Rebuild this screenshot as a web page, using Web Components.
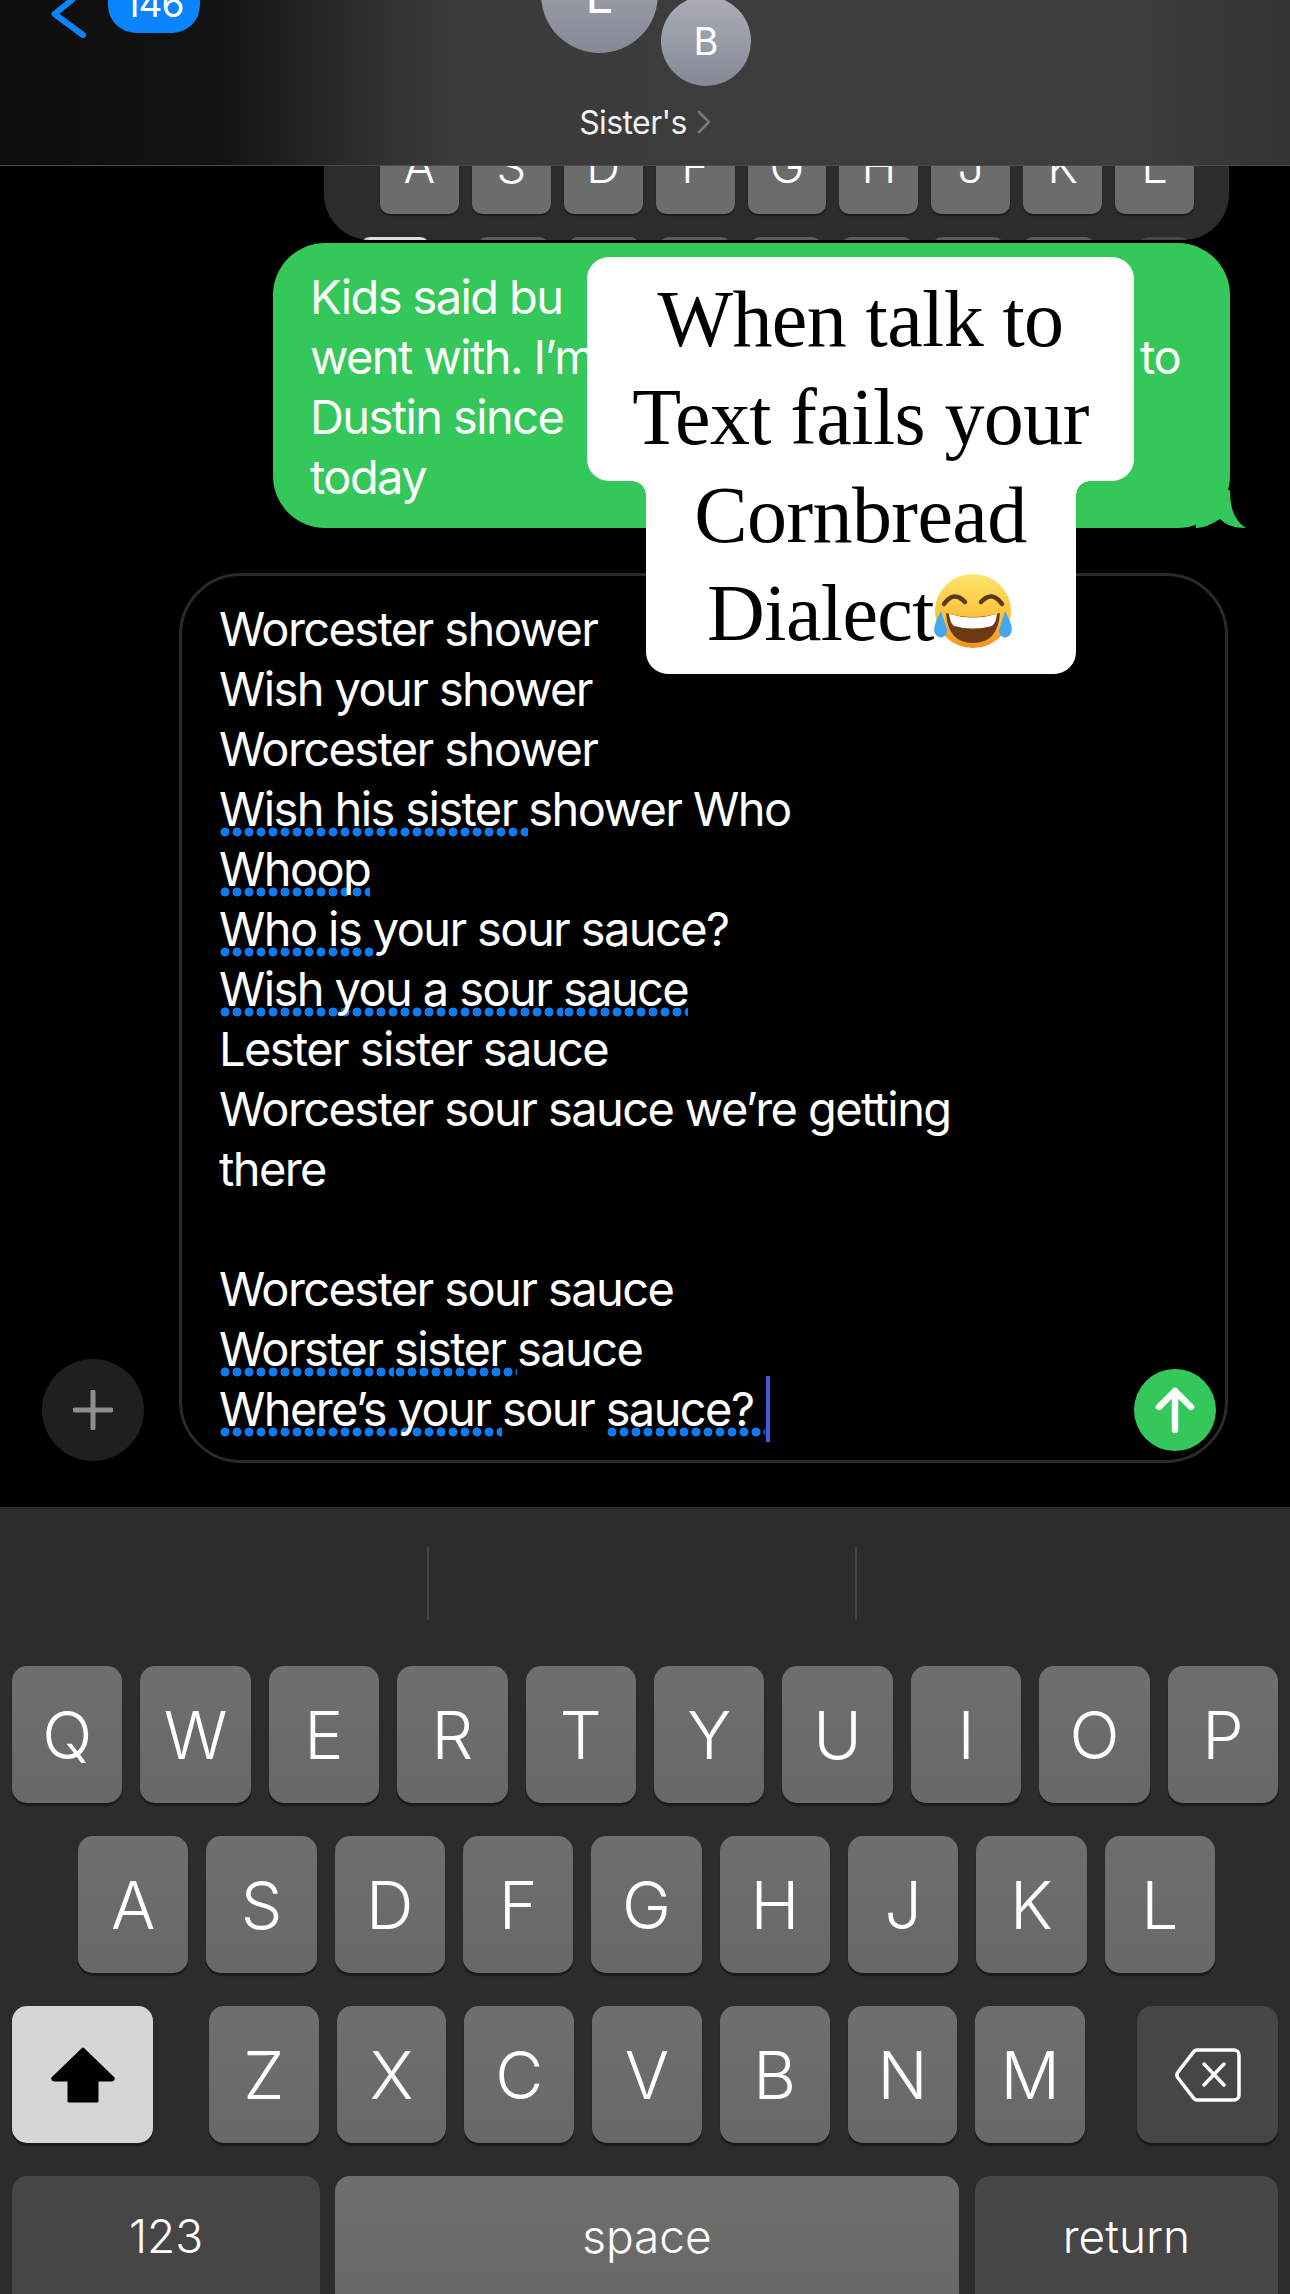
<!DOCTYPE html>
<html lang="en">
<head>
<meta charset="utf-8">
<title>Messages</title>
<style>
  html, body { margin: 0; padding: 0; background: #000; }
  body { width: 1290px; height: 2294px; overflow: hidden; font-family: Inter, "Liberation Sans", sans-serif; color: #fff; }
  chat-screen { width: 1290px; }
</style>
</head>
<body>
<chat-screen>
  <thread-header slot="header" count="146" title="Sister's"></thread-header>
  <mini-keyboard slot="header"></mini-keyboard>
  <chat-bubble>
    <div>Kids said bu</div>
    <div class="split"><span>went with. I’m</span><span>to</span></div>
    <div>Dustin since</div>
    <div>today</div>
  </chat-bubble>
  <compose-bar>
    <div>Worcester shower</div>
    <div>Wish your shower</div>
    <div>Worcester shower</div>
    <div><spell-word>Wish his sister</spell-word> shower Who</div>
    <div><spell-word>Whoop</spell-word></div>
    <div><spell-word>Who is</spell-word> your sour sauce?</div>
    <div><spell-word>Wish you a</spell-word> <spell-word>sour</spell-word> <spell-word>sauce</spell-word></div>
    <div>Lester sister sauce</div>
    <div>Worcester sour sauce we’re getting</div>
    <div>there</div>
    <div>&nbsp;</div>
    <div>Worcester sour sauce</div>
    <div><spell-word>Worster</spell-word> <spell-word>sister</spell-word> sauce</div>
    <div><spell-word>Where’s your</spell-word> sour <spell-word>sauce?</spell-word><text-caret></text-caret></div>
  </compose-bar>
  <ios-keyboard></ios-keyboard>
  <text-sticker></text-sticker>
</chat-screen>

<script>
const shadow = (el, html) => {
  el.attachShadow({ mode: 'open' });
  el.shadowRoot.innerHTML = html;
};

class ChatScreen extends HTMLElement {
  constructor() {
    super();
    shadow(this, `
      <style>
        :host { display: block; position: relative; height: 2294px; overflow: hidden; background: #000; }
      </style>
      <slot name="header"></slot>
      <slot></slot>
    `);
  }
}

class ThreadHeader extends HTMLElement {
  connectedCallback() {
    const count = this.getAttribute('count');
    const title = this.getAttribute('title');
    shadow(this, `
      <style>
        :host {
          display: block;
          height: 165px;
          overflow: hidden;
          border-bottom: 1px solid #4a4a4a;
          background: linear-gradient(90deg, #0e0e0e 0, #131313 17%, #2b2b2b 27%, #3b3b3b 35%, #3e3e3e 86%, #343434 100%);
        }
        .top { display: flex; align-items: flex-start; height: 86px; padding-left: 51px; }
        .back { width: 36px; height: 38px; flex: none; }
        .badge {
          width: 92px; height: 60px; margin: -27px 0 0 21px; flex: none;
          border-radius: 28px; background: #0a84ff;
          display: flex; align-items: center; justify-content: center;
          font-size: 37px; letter-spacing: -1px;
        }
        .avatar {
          flex: none; border-radius: 50%;
          display: flex; align-items: center; justify-content: center;
          background: linear-gradient(#abaeb9, #858995);
        }
        .l { width: 117px; height: 117px; margin: -64px 0 0 341px; font-size: 50px; }
        .b { width: 90px; height: 90px; margin: -4px 0 0 3px; font-size: 38px; }
        .title { display: flex; justify-content: center; align-items: center; gap: 10px; margin-top: 16px; height: 40px; font-size: 32px; letter-spacing: -.6px; color: #f2f2f2; }
        .title svg { width: 14px; height: 24px; }
      </style>
      <div class="top">
        <svg class="back" viewBox="0 0 36 38" fill="none" stroke="#0a84ff" stroke-width="6" stroke-linecap="round" stroke-linejoin="round"><path d="M21 0 L3.5 14 L32 35"/></svg>
        <div class="badge">${count}</div>
        <div class="avatar l">L</div>
        <div class="avatar b">B</div>
      </div>
      <div class="title"><span>${title}</span>
        <svg viewBox="0 0 14 24" fill="none" stroke="#7a7a7a" stroke-width="2.5" stroke-linecap="round" stroke-linejoin="round"><path d="M2 2 L12 12 L2 22"/></svg>
      </div>
    `);
  }
}

// the keyboard from the earlier screenshot, cut off by the header
class MiniKeyboard extends HTMLElement {
  constructor() {
    super();
    const letters = 'ASDFGHJKL'.split('').map(c => `<div class="k">${c}</div>`).join('');
    const dark = Array(7).fill('<div class="k2"></div>').join('');
    shadow(this, `
      <style>
        :host {
          display: block; box-sizing: border-box;
          width: 905px; height: 74px; margin-left: 324px;
          overflow: hidden; background: #2c2c2c;
          border-radius: 0 0 46px 46px;
        }
        .row1 { display: flex; gap: 13px; height: 98px; margin-top: -50px; padding: 0 35px 0 56px; }
        .k {
          flex: 1; border-radius: 10px;
          background: #6c6c6c; box-shadow: 0 2px 1px #1b1b1b;
          display: flex; align-items: center; justify-content: center;
          font-size: 47px; font-weight: 300;
        }
        .row2 { display: flex; gap: 19px; height: 98px; margin-top: 23px; padding-left: 36px; }
        .shift { width: 70px; flex: none; margin-right: 28px; border-radius: 10px; background: #dcdcdc; }
        .k2 { width: 72px; flex: none; border-radius: 10px; background: #5c5c5c; }
        .del { width: 51px; flex: none; margin-left: 25px; border-radius: 10px; background: #464646; }
      </style>
      <div class="row1">${letters}</div>
      <div class="row2"><div class="shift"></div>${dark}<div class="del"></div></div>
    `);
  }
}

class ChatBubble extends HTMLElement {
  constructor() {
    super();
    shadow(this, `
      <style>
        :host {
          display: block; box-sizing: border-box; position: relative;
          width: 957px; height: 285px; margin: 3px 0 0 273px;
          padding: 24px 50px 21px 37px;
          border-radius: 52px; background: #34c759;
          font-size: 47px; line-height: 60px; letter-spacing: -1.6px;
        }
        ::slotted(.split) { display: flex; justify-content: space-between; }
        .tail { position: absolute; right: -16px; bottom: 0; width: 50px; height: 38px; }
      </style>
      <slot></slot>
      <svg class="tail" viewBox="0 0 50 38"><path fill="#34c759" d="M34 0 C34 18 38 30 50 38 C38 38 30 35 24 29 C16 34 8 38 0 38 L0 0 Z"/></svg>
    `);
  }
}

class SpellWord extends HTMLElement {
  constructor() {
    super();
    shadow(this, `
      <style>
        :host {
          display: inline;
          background-image: radial-gradient(circle at 6px 5px, #0d7bf2 4.2px, transparent 4.8px);
          background-size: 12px 10px;
          background-repeat: repeat-x;
          background-position: left bottom;
        }
      </style>
      <slot></slot>
    `);
  }
}

class TextCaret extends HTMLElement {
  constructor() {
    super();
    shadow(this, `
      <style>
        :host {
          display: inline-block; width: 4px; height: 66px;
          margin: -8px 0 -8px 1px; vertical-align: -8px;
          background: #3d5fd9;
        }
      </style>
    `);
  }
}

class ComposeBar extends HTMLElement {
  constructor() {
    super();
    shadow(this, `
      <style>
        :host { display: flex; align-items: flex-end; gap: 35px; margin-top: 45px; padding: 0 62px 0 42px; }
        .plus {
          width: 102px; height: 102px; margin-bottom: 2px; flex: none;
          border-radius: 50%; background: #1f1f20;
          display: flex; align-items: center; justify-content: center;
        }
        .plus svg { width: 40px; height: 40px; }
        .field {
          flex: 1; display: flex; box-sizing: border-box; height: 890px;
          padding: 0 9px 9px 37px;
          border: 3px solid #2a2a2c; border-radius: 62px;
        }
        .text { flex: 1; padding: 23px 0 12px; font-size: 47px; line-height: 60px; letter-spacing: -1.6px; white-space: nowrap; }
        .send {
          width: 82px; height: 82px; flex: none; align-self: flex-end;
          border-radius: 50%; background: #34c759;
          display: flex; align-items: center; justify-content: center;
        }
        .send svg { width: 40px; height: 46px; }
      </style>
      <div class="plus">
        <svg viewBox="0 0 40 40" fill="none" stroke="#8f8f8f" stroke-width="5" stroke-linecap="round"><path d="M20 2 V38 M2 20 H38"/></svg>
      </div>
      <div class="field">
        <div class="text"><slot></slot></div>
        <div class="send">
          <svg viewBox="0 0 40 46" fill="none" stroke="#fff" stroke-width="6.5" stroke-linecap="round" stroke-linejoin="round"><path d="M20 43 V4 M4 20 L20 4 L36 20"/></svg>
        </div>
      </div>
    `);
  }
}

class KbKey extends HTMLElement {
  constructor() {
    super();
    shadow(this, `
      <style>
        :host {
          display: flex; align-items: center; justify-content: center;
          box-sizing: border-box; flex: 1; min-width: 0; height: 100%;
          border-radius: 15px;
          background: linear-gradient(#6f6f6f, #686868);
          box-shadow: 0 3px 1px #1b1b1b;
          font-size: 66px; font-weight: 300; color: #fff;
        }
        :host([tone="dark"]) { background: #464646; }
        :host([tone="light"]) { background: #d6d6d6; }
        :host([small]) { font-size: 46px; font-weight: 300; box-shadow: none; }
      </style>
      <slot></slot>
    `);
  }
}

class IosKeyboard extends HTMLElement {
  constructor() {
    super();
    const keys = s => s.split('').map(c => `<kb-key>${c}</kb-key>`).join('');
    shadow(this, `
      <style>
        :host { display: block; height: 787px; margin-top: 44px; background: #2c2c2c; box-sizing: border-box; padding-top: 40px; }
        .suggest { display: grid; grid-template-columns: 427px 430px 1fr; height: 73px; margin-bottom: 46px; }
        .suggest i { display: block; }
        .suggest i:nth-child(2) { border-left: 2px solid #444; border-right: 2px solid #444; }
        .row { display: flex; gap: 18px; height: 137px; margin-bottom: 33px; }
        .r1 { padding: 0 12px; }
        .r2 { padding: 0 75px 0 78px; }
        .r3 { padding: 0 12px; }
        .r3 .side { flex: 0 0 141px; }
        .r3 .shift { margin-right: 38px; }
        .r3 .del { margin-left: 34px; }
        .r4 { padding: 0 12px; height: 119px; gap: 15px; margin-bottom: 0; }
        .r4 kb-key:nth-child(1) { flex: 0 0 308px; }
        .r4 kb-key:nth-child(2) { flex: 0 0 624px; }
        .r4 kb-key:nth-child(3) { flex: 0 0 303px; margin-left: 1px; }
        .r4 kb-key { border-radius: 15px 15px 0 0; }
        .shift svg { width: 64px; height: 56px; }
        .del svg { width: 66px; height: 54px; }
      </style>
      <div class="suggest"><i></i><i></i><i></i></div>
      <div class="row r1">${keys('QWERTYUIOP')}</div>
      <div class="row r2">${keys('ASDFGHJKL')}</div>
      <div class="row r3">
        <kb-key class="side shift" tone="light">
          <svg viewBox="0 0 64 56"><path fill="#000" stroke="#000" stroke-width="3" stroke-linejoin="round" d="M32 2 L62 31 Q63 33 60 33 L46 33 L46 54 L18 54 L18 33 L4 33 Q1 33 2 31 Z"/></svg>
        </kb-key>
        ${keys('ZXCVBNM')}
        <kb-key class="side del" tone="dark">
          <svg viewBox="0 0 66 54" fill="none" stroke="#fff" stroke-width="3.5" stroke-linecap="round" stroke-linejoin="round"><path d="M22 2 H59 a5 5 0 0 1 5 5 V47 a5 5 0 0 1 -5 5 H22 a4 4 0 0 1 -3 -1.4 L3 30 a5 5 0 0 1 0 -6 L19 3.4 a4 4 0 0 1 3 -1.4 Z M29 16 L49 37 M49 16 L29 37"/></svg>
        </kb-key>
      </div>
      <div class="row r4">
        <kb-key tone="dark" small>123</kb-key>
        <kb-key small>space</kb-key>
        <kb-key tone="dark" small>return</kb-key>
      </div>
    `);
  }
}

class TextSticker extends HTMLElement {
  constructor() {
    super();
    shadow(this, `
      <style>
        :host {
          position: absolute; left: 587px; top: 257px;
          width: 547px; height: 417px;
          font-family: "Liberation Serif", serif; font-size: 80px; line-height: 98px;
          color: #000; text-align: center; letter-spacing: -.6px;
        }
        .wide, .narrow { position: absolute; background: #fff; }
        .wide { left: 0; top: 0; width: 547px; height: 224px; border-radius: 22px; }
        .narrow { left: 59px; top: 200px; width: 430px; height: 217px; border-radius: 0 0 22px 22px; }
        .notch { position: absolute; top: 224px; width: 14px; height: 14px; }
        .notch.a { left: 45px; background: radial-gradient(circle at 0 100%, transparent 13.5px, #fff 14px); }
        .notch.b { left: 489px; background: radial-gradient(circle at 100% 100%, transparent 13.5px, #fff 14px); }
        .lines { position: relative; padding-top: 13px; }
        .lines svg { width: 82px; height: 78px; vertical-align: -11px; margin-left: -2px; }
      </style>
      <div class="wide"></div><div class="narrow"></div>
      <div class="notch a"></div><div class="notch b"></div>
      <div class="lines">
        <div>When talk to</div>
        <div>Text fails your</div>
        <div>Cornbread</div>
        <div>Dialect<svg viewBox="0 0 82 78">
          <defs><linearGradient id="face" x1="0" y1="0" x2="0" y2="1"><stop offset="0" stop-color="#fde56e"/><stop offset=".55" stop-color="#fbc33a"/><stop offset="1" stop-color="#ee9320"/></linearGradient></defs>
          <ellipse cx="41" cy="38" rx="38" ry="37" fill="url(#face)"/>
          <path d="M12 31 Q22 17 33 29" fill="none" stroke="#5b3a1e" stroke-width="4.5" stroke-linecap="round"/>
          <path d="M49 29 Q60 17 70 31" fill="none" stroke="#5b3a1e" stroke-width="4.5" stroke-linecap="round"/>
          <path d="M14 40 Q41 48 68 40 Q66 70 41 70 Q16 70 14 40 Z" fill="#6b3a14"/>
          <path d="M17 41 Q41 48 65 41 Q64 50 60 53 Q41 58 22 53 Q18 50 17 41 Z" fill="#fff"/>
          <path d="M9 38 C3 50 0 56 4 62 C9 68 18 62 14 54 Z" fill="#45a7ee"/>
          <path d="M73 38 C79 50 82 56 78 62 C73 68 64 62 68 54 Z" fill="#45a7ee"/>
        </svg></div>
      </div>
    `);
  }
}

customElements.define('chat-screen', ChatScreen);
customElements.define('thread-header', ThreadHeader);
customElements.define('mini-keyboard', MiniKeyboard);
customElements.define('chat-bubble', ChatBubble);
customElements.define('spell-word', SpellWord);
customElements.define('text-caret', TextCaret);
customElements.define('compose-bar', ComposeBar);
customElements.define('kb-key', KbKey);
customElements.define('ios-keyboard', IosKeyboard);
customElements.define('text-sticker', TextSticker);
</script>
</body>
</html>
